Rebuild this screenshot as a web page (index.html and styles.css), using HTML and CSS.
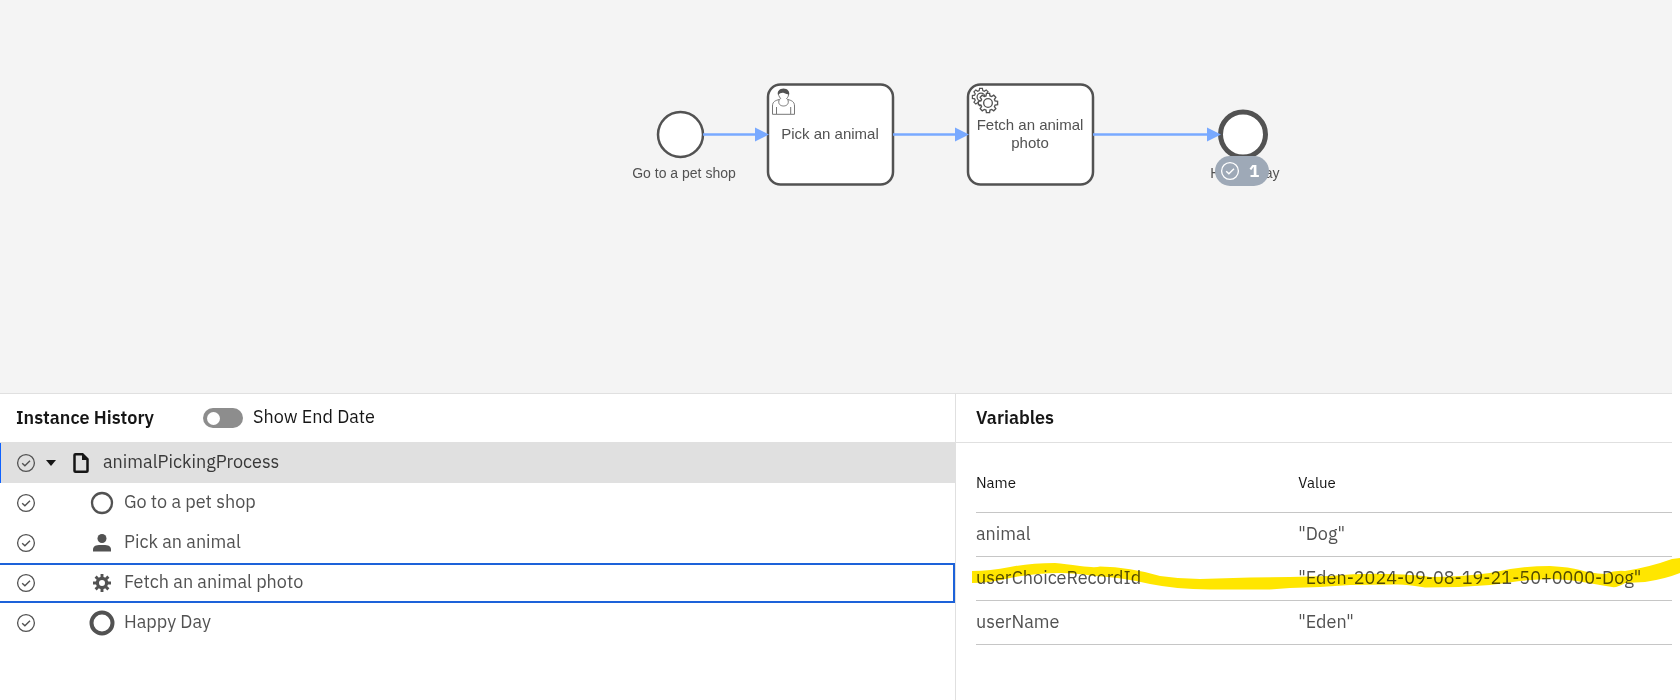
FILE: index.html
```html
<!DOCTYPE html>
<html lang="en">
<head>
<meta charset="utf-8">
<title>animalPickingProcess</title>
<link rel="stylesheet" href="styles.css">
</head>
<body>
<svg class="sprite" aria-hidden="true">
  <symbol id="check" viewBox="0 0 20 20">
    <circle cx="10" cy="10" r="8.4" fill="none" stroke="currentColor" stroke-width="1.3"/>
    <path d="M6.2 10.2 8.9 12.8 14 7.7" fill="none" stroke="currentColor" stroke-width="1.4"/>
  </symbol>
  <symbol id="cog" viewBox="-12 -12 24 24" overflow="visible">
    <path d="M-1.9-11.500H1.900L2.400-8.500 4.400-7.700 6.900-9.400 9.400-6.900 7.700-4.400 8.500-2.400 11.500-1.900V1.900L8.500 2.400 7.700 4.400 9.400 6.900 6.900 9.400 4.400 7.700 2.400 8.500 1.900 11.500H-1.900L-2.400 8.500-4.400 7.700-6.900 9.400-9.400 6.900-7.700 4.400-8.500 2.400-11.500 1.900V-1.900L-8.500-2.400-7.700-4.400-9.400-6.900-6.900-9.400-4.400-7.700-2.400-8.500Z"/>
    <circle r="5.200"/>
  </symbol>
</svg>
<main class="instance">
  <section class="diagram" aria-label="Process diagram">
    <svg class="canvas" viewBox="0 0 1672 393">
      <g class="shape">
        <circle cx="680.5" cy="134.5" r="22.5"/>
        <rect x="768" y="84.5" width="125" height="100" rx="12.5"/>
        <rect x="968" y="84.5" width="125" height="100" rx="12.5"/>
        <circle class="end" cx="1243" cy="134.5" r="22.5"/>
      </g>
      <g class="flow">
        <path d="M703 134.5H758M893 134.5H958M1093 134.5H1210"/>
        <path class="head" d="M755 127.5 769 134.5 755 141.5ZM955 127.5 969 134.5 955 141.5ZM1207 127.5 1221 134.5 1207 141.5Z"/>
      </g>
      <g class="user">
        <path d="M772.500 114.300V106C772.500 101.500 775.500 100.500 779.300 99.500C777.500 104 780.500 106 783.500 106C786.500 106 789.500 104 787.800 99.500C791.500 100.500 794.500 101.500 794.500 106V114.300ZM776.500 114V107M790.700 114V107"/>
        <path d="M779.300 99.500 780.700 98.500C778.800 96.500 778.300 94.500 778.500 93M788.600 93C788.800 95.500 788 97.500 786.500 98.500L787.800 99.500"/>
        <path class="hair" d="M778 95C776.800 91.500 779.800 88.600 783.500 88.600C787.200 88.600 790.200 91.500 789 95C787.500 93.800 785.500 94 784 93C782.500 92.300 780 92.800 778 95Z"/>
      </g>
      <g class="gears">
        <use href="#cog" x="972" y="88" width="18" height="18"/>
        <use href="#cog" x="978" y="93" width="20" height="20"/>
      </g>
      <g class="task-name">
        <text x="830" y="139">Pick an animal</text>
        <text x="1030" y="130">Fetch an animal</text>
        <text x="1030" y="148">photo</text>
      </g>
      <g class="event-name">
        <text x="684" y="178">Go to a pet shop</text>
        <text x="1245" y="178">Happy Day</text>
      </g>
      <g class="badge">
        <rect x="1215" y="156" width="54" height="30" rx="15"/>
        <use href="#check" x="1220" y="161" width="20" height="20"/>
        <text x="1254" y="177">1</text>
      </g>
    </svg>
  </section>
  <div class="panels">
    <section class="history">
      <header class="bar">
        <h2>Instance History</h2>
        <label class="toggle"><input type="checkbox" role="switch"><span>Show End Date</span></label>
      </header>
      <ul class="tree">
        <li class="row root">
          <svg class="state"><use href="#check"/></svg>
          <button class="fold" type="button" aria-label="Collapse"></button>
          <svg class="doc" viewBox="0 0 16 20"><path d="M1.500 2Q1.500 1.300 2.500 1.300H9.500L14.500 6.300V18Q14.500 18.700 13.500 18.700H2.500Q1.500 18.700 1.500 18Z" fill="none" stroke="currentColor" stroke-width="2.500"/><path d="M9 1V7H15Z" fill="currentColor"/></svg>
          <span>animalPickingProcess</span>
        </li>
        <li class="row">
          <svg class="state"><use href="#check"/></svg>
          <svg class="kind" viewBox="0 0 26 26"><circle cx="13" cy="13" r="10" fill="none" stroke="currentColor" stroke-width="2.300"/></svg>
          <span>Go to a pet shop</span>
        </li>
        <li class="row">
          <svg class="state"><use href="#check"/></svg>
          <svg class="kind" viewBox="0 0 26 26"><path d="M4 21.500V19.500C4 15 9 15 13 15S22 15 22 19.500V21.500Z" fill="currentColor"/><circle cx="13" cy="8.500" r="4.500" fill="currentColor"/></svg>
          <span>Pick an animal</span>
        </li>
        <li class="row focused">
          <svg class="state"><use href="#check"/></svg>
          <svg class="kind" viewBox="0 0 26 26"><circle cx="13" cy="13" r="4.600" fill="none" stroke="currentColor" stroke-width="3.200"/><path d="M13 4V8M13 18V22M4 13H8M18 13H22M6.600 6.600 9.500 9.500M16.500 16.500 19.400 19.400M19.400 6.600 16.500 9.500M9.500 16.500 6.600 19.400" stroke="currentColor" stroke-width="2.900"/></svg>
          <span>Fetch an animal photo</span>
        </li>
        <li class="row">
          <svg class="state"><use href="#check"/></svg>
          <svg class="kind" viewBox="0 0 26 26"><circle cx="13" cy="13" r="10.500" fill="none" stroke="currentColor" stroke-width="4"/></svg>
          <span>Happy Day</span>
        </li>
      </ul>
    </section>
    <section class="variables">
      <header class="bar"><h2>Variables</h2></header>
      <div class="table-area">
        <table>
          <thead><tr><th class="name" scope="col">Name</th><th scope="col">Value</th></tr></thead>
          <tbody>
            <tr><td>animal</td><td>"Dog"</td></tr>
            <tr><td>userChoiceRecordId</td><td>"Eden-2024-09-08-19-21-50+0000-Dog"</td></tr>
            <tr><td>userName</td><td>"Eden"</td></tr>
          </tbody>
        </table>
        <svg class="marker" viewBox="972 557 708 40" preserveAspectRatio="none" aria-hidden="true"><path d="M972 572Q990 572 1010 568T1055 564Q1065 565 1080 567T1100 567.500Q1130 568 1160 577Q1180 580 1200 580L1250 578.500 1290 578 1330 577Q1360 574 1390 575T1430 578Q1460 578 1490 574Q1520 567 1550 567Q1570 568 1580 571T1605 575Q1615 571 1625 572Q1650 568 1672 560L1680 559V574Q1665 580 1645 583L1625 584Q1617 589 1612 588L1600 586Q1570 580 1550 580T1490 586Q1460 588.500 1425 588.500Q1405 585 1395 585.500L1350 586 1320 588 1290 589 1270 590.500 1210 590.500Q1175 590 1150 585Q1120 578 1095 577Q1075 574 1060 574Q1035 574 1010 579Q990 584 972 584Z"/></svg>
      </div>
    </section>
  </div>
</main>
</body>
</html>
```
FILE: styles.css
```css
* { box-sizing: border-box; }
body {
  margin: 0;
  background: #fff;
  color: #161616;
  font: 18px/24px "IBM Plex Sans", "Noto Sans", sans-serif;
}
.sprite { position: absolute; width: 0; height: 0; }
.instance {
  display: flex;
  flex-direction: column;
  min-height: 100vh;
  margin-right: 8px;
}
.diagram { background: #f4f4f4; border-bottom: 1px solid #e0e0e0; }
.canvas { display: block; width: 100%; height: auto; font-family: "Liberation Sans", Arial, sans-serif; }
.canvas text { text-anchor: middle; fill: #525252; }
.shape { fill: #fff; stroke: #525252; stroke-width: 2.5; }
.shape .end { stroke-width: 5; }
.flow { fill: none; stroke: #78a9ff; stroke-width: 2.5; }
.flow .head { fill: #78a9ff; stroke: none; }
.user { fill: none; stroke: #777; stroke-width: 1; }
.user .hair { fill: #525252; stroke: none; }
.gears { fill: #fff; stroke: #525252; stroke-width: 1.6; }
.task-name { font-size: 15px; }
.event-name { font-size: 14px; }
.badge rect { fill: #9ea9b7; }
.badge { color: #fff; }
.canvas .badge text { fill: #fff; font: 700 17px "IBM Plex Sans", "Noto Sans", sans-serif; }

.panels { display: grid; grid-template-columns: 239fr 179fr; flex: 1; }
.history { border-right: 1px solid #e0e0e0; }
.bar {
  display: flex;
  align-items: center;
  gap: 49px;
  height: 49px;
  padding: 0 16px;
  border-bottom: 1px solid #e0e0e0;
}
.variables .bar { padding-left: 20px; }
h2 { margin: 0; font-size: 18px; font-weight: 600; }
.toggle { display: flex; align-items: center; gap: 10px; }
.toggle span, .row span { padding-bottom: 2px; }
.toggle input {
  appearance: none;
  display: flex;
  align-items: center;
  width: 40px;
  height: 20px;
  margin: 0;
  padding: 0 4px;
  border-radius: 10px;
  background: #8d8d8d;
}
.toggle input::before { content: ""; width: 13px; height: 13px; border-radius: 50%; background: #fff; }
.toggle input:checked { justify-content: flex-end; }

.tree { margin: 0; padding: 0; list-style: none; }
.row {
  display: flex;
  align-items: center;
  height: 40px;
  padding-left: 16px;
  color: #525252;
}
.root { background: #e0e0e0; box-shadow: inset 1px 0 #0f62fe; color: #393939; }
.focused { border: 2px solid #1d62d9; border-left: 0; }
.state { width: 20px; height: 20px; color: #525252; }
.fold {
  width: 10px;
  height: 6px;
  margin: 0 17px 0 10px;
  padding: 0;
  border: 0;
  background: #161616;
  clip-path: polygon(0 0, 100% 0, 50% 100%);
}
.doc { width: 16px; height: 20px; margin-right: 14px; color: #161616; }
.kind { width: 26px; height: 26px; margin: 0 9px 0 53px; }

.table-area { position: relative; padding: 11px 0 0 20px; }
table { width: 100%; border-spacing: 0; table-layout: fixed; }
th, td { padding: 0; border-bottom: 1px solid #c6c6c6; text-align: left; }
th { height: 59px; font-size: 15px; font-weight: 400; }
td { height: 44px; padding-bottom: 2px; color: #525252; }
.name { width: 46.3%; }
.marker {
  position: absolute;
  top: 113px;
  left: 16px;
  width: calc(100% - 8px);
  height: 40px;
  fill: #ffe600;
  mix-blend-mode: multiply;
}
```
